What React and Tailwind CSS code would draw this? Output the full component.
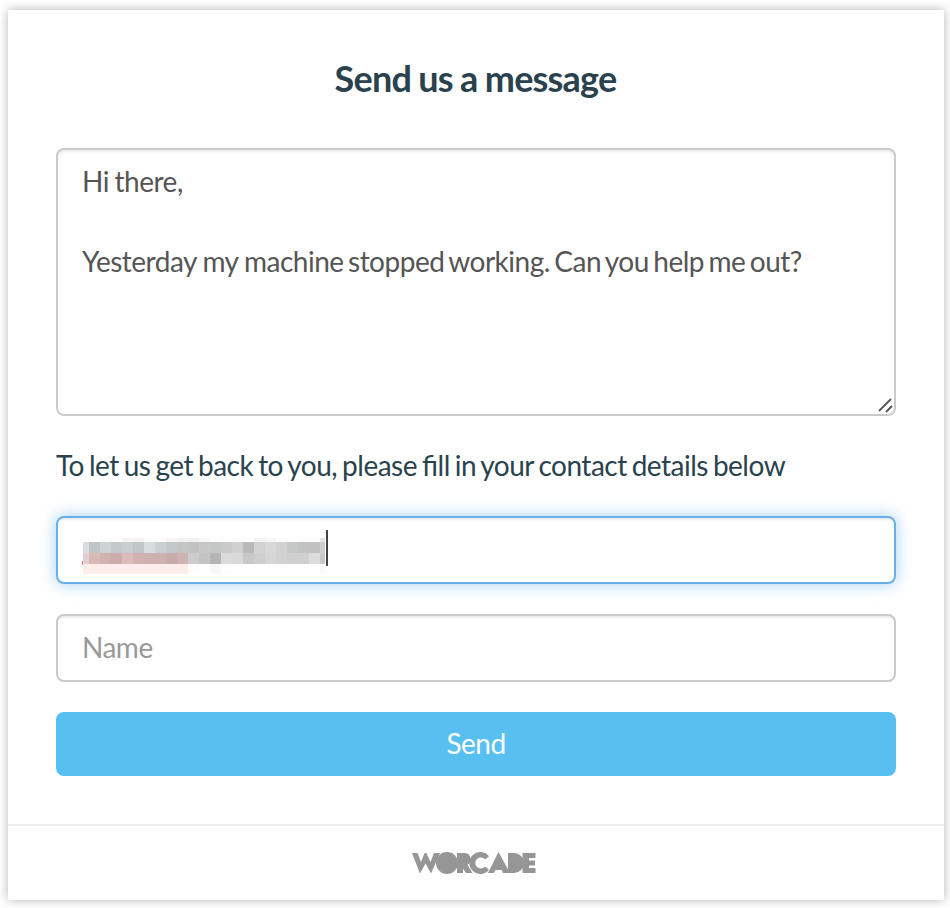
const TOP = ['', '', '', '', '#f5f4f3', '#f4f3f2', '', '', '#f6f5f4', '#f2f1f1', '#f1f0f0', '#f7f7f6', '', '', '', '', '#f3f3f3', '#f5f5f5', '', '', '', '', '#e4e4e4'];
const ROW1 = ['#d9dddd', '#c0c6c5', '#ced3d3', '#c4cac9', '#c9cfd0', '#c1c7c6', '#d7dddd', '#cad0d2', '#c2c8c7', '#c1c6c5', '#c1c1c1', '#c7c7c7', '#c3c6c5', '#c9c9c9', '#d0d0d0', '#b9b9b9', '#d2d2d2', '#d8d8d8', '#cfd2d1', '#c5c8c7', '#c1c3c2', '#c1c1c1', '#cfcfcf'];
const ROW2 = ['#e3cfcf', '#dab8b6', '#cfb1b0', '#cbacab', '#dabcba', '#d1b2b1', '#ceb0af', '#ceb0af', '#c9abaa', '#ceb3b2', '#cbcdcc', '#c4c4c4', '#b4b4b4', '#dadada', '#d8dad9', '#c8c8c8', '#cecece', '#d6d6d6', '#d2d2d2', '#cfcfcf', '#cecfce', '#dcdcdc', '#c9c9c9'];
const ROW3 = ['#fdeeec', '#fdeeec', '#fdeeec', '#fdeeec', '#fdeeec', '#fdeeec', '#fdeeec', '#fdeeec', '#fdeeec', '#fdeeec', '#fdfdfb', '', '#f7f7f5', '#fdfdfd', '', '', '', '', '', '', '', '', '#fbfbfb'];

function MosaicRow({ cells, height }) {
  return (
    <div className={`flex ${height}`}>
      {cells.map((c, i) => (
        <div
          key={i}
          className={i === 0 ? 'w-[6px]' : i === cells.length - 1 ? 'w-[5px]' : 'w-[11px]'}
          style={{ backgroundColor: c || 'transparent' }}
        />
      ))}
    </div>
  );
}

function Logo() {
  return (
    <svg width="124" height="22" viewBox="0 0 124 22" fill="#969696" aria-label="Worcade">
      <path d="M0 1h5.500l3.500 9L12.600 1h1.800l4.100 9L22 1h6L19 21.500 13.500 11.500 8 21.500z" />
      <circle cx="35" cy="11" r="11" />
      <path d="M45 1h7.500a6.300 6.300 0 0 1 3 11.800L60.500 21h-6.500L51 16.500V21H45z" />
      <path d="M77 4.300A11 11 0 1 0 77 17.700L73 14.500A5.500 5.500 0 1 1 73 7.500z" />
      <path d="M86.500 0 98 21H91l-1.300-3h-6.400L82 21h-6z" />
      <path d="M96 1h6a10 10 0 0 1 0 20h-6z" />
      <path d="M110.500 1h13v5h-6.500v2.500h6v5h-6V16h6.500v5h-13z" />
    </svg>
  );
}

export default function App() {
  return (
    <div className="h-[908px] w-[950px] overflow-hidden bg-white pt-[10px] pl-2 font-['Lato',sans-serif]">
      <div className="flex h-[890px] w-[936px] flex-col bg-white shadow-[0_0_10px_rgba(0,0,0,0.3)]">
        <form className="flex h-[814px] flex-col px-12 pt-11">
          <h1 className="h-12 pr-px text-center text-[36px] leading-[48px] font-bold tracking-[-0.8px] text-[#2a424d] [word-spacing:-0.7px]">
            Send us a message
          </h1>
          <div className="relative mt-[46px] h-[268px] rounded-lg border-2 border-[#cacaca] px-6 py-[11px] text-[28px] leading-10 tracking-[-0.5px] text-[#555] shadow-[inset_0_2px_2px_rgba(0,0,0,0.075)] [word-spacing:-2.2px]">
            <p className="[word-spacing:-1px]">Hi there,</p>
            <p className="mt-10 whitespace-nowrap">
              <span className="[word-spacing:-0.5px]">Yesterday my </span>machine stopped working. Can you help me out?
            </p>
            <svg className="absolute right-0 bottom-0" width="18" height="18" viewBox="0 0 18 18" fill="none" stroke="#555" strokeWidth="1.800">
              <path d="M3 15 15 3M10 16l6-6" />
            </svg>
          </div>
          <p className="mt-[29px] h-10 text-[28px] leading-10 tracking-[-0.5px] whitespace-nowrap text-[#2a424d] [font-feature-settings:'liga'_1] [word-spacing:-1.7px]">
            To let us get back to you, please fill in your contact details below
          </p>
          <div className="mt-[31px] flex h-[68px] rounded-lg border-2 border-[#66afe9] pt-[12px] pl-[25px] shadow-[inset_0_2px_2px_rgba(0,0,0,0.075),0_0_16px_rgba(102,175,233,0.6)]">
            <div className="relative mt-2 w-[243px]">
              <MosaicRow cells={TOP} height="h-1" />
              <MosaicRow cells={ROW1} height="h-[11px]" />
              <MosaicRow cells={ROW2} height="h-[11px]" />
              <MosaicRow cells={ROW3} height="h-[10px]" />
              <div className="absolute top-[23px] -left-px h-1 w-px bg-[#f08078]" />
            </div>
            <div className="h-9 w-[2px] bg-[#444]" />
          </div>
          <div className="mt-[30px] h-[68px] rounded-lg border-2 border-[#cacaca] px-6 text-[28px] leading-[62px] tracking-[-0.5px] text-[#999] shadow-[inset_0_2px_2px_rgba(0,0,0,0.075)]">
            Name
          </div>
          <button type="button" className="mt-[30px] h-16 rounded-lg bg-[#58c0f0] pb-[2px] text-[28px] leading-[62px] tracking-[-0.5px] text-white">
            Send
          </button>
        </form>
        <footer className="flex h-[76px] justify-center border-t-2 border-[#eee] pt-[26px] pr-1">
          <Logo />
        </footer>
      </div>
    </div>
  );
}
